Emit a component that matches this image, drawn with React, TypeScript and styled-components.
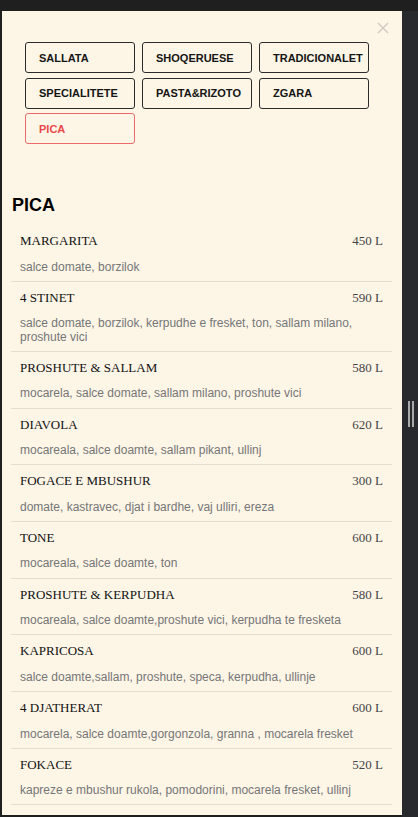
import React from "react";
import styled, { createGlobalStyle } from "styled-components";

const Global = createGlobalStyle`
  html, body { margin: 0; padding: 0; background: #1f1f1f; height: 100%; overflow: hidden; }
  #root { height: 100%; }
`;

const Page = styled.div`
  display: flex;
  flex-direction: column;
  height: 817px;
`;

const TopBar = styled.div`
  height: 11px;
  background: #1f1f1f;
  flex: none;
`;

const Body = styled.div`
  display: flex;
  flex: 1;
  min-height: 0;
  padding-left: 2px;
`;

const Panel = styled.div`
  position: relative;
  width: 400px;
  height: 804px;
  background: #fdf5e6;
  flex: none;
`;

const Strip = styled.div`
  flex: 1;
  background: #27292c;
  display: flex;
  align-items: flex-start;
  justify-content: center;
  padding-top: 390px;
`;

const Handle = styled.div`
  display: flex;
  gap: 2px;
  margin-left: 1px;
`;

const Bar = styled.span`
  width: 2px;
  height: 26px;
  background: #a9a9a9;
`;

const Close = styled.button`
  position: absolute;
  top: 11px;
  right: 13px;
  width: 12px;
  height: 12px;
  padding: 0;
  border: 0;
  background: none;
  display: flex;
`;

const Tabs = styled.div`
  display: grid;
  grid-template-columns: repeat(3, 110px);
  column-gap: 7px;
  row-gap: 4.5px;
  padding: 31px 0 0 23px;
`;

const Tab = styled.button<{ $active?: boolean }>`
  height: 31px;
  box-sizing: border-box;
  border: 1.5px solid ${(p) => (p.$active ? "#ec6a6a" : "#2b2b2b")};
  border-radius: 3px;
  background: transparent;
  text-align: left;
  padding: 0 0 0 13px;
  font-family: Arial, "Liberation Sans", sans-serif;
  font-weight: bold;
  font-size: 11px;
  color: ${(p) => (p.$active ? "#e8494b" : "#151515")};
`;

const Heading = styled.h2`
  margin: 50px 0 0 10px;
  font-family: Arial, "Liberation Sans", sans-serif;
  font-weight: bold;
  font-size: 18px;
  line-height: 22px;
  color: #000;
`;

const List = styled.ul`
  list-style: none;
  margin: 9px 10px 0 9px;
  padding: 0;
`;

const Item = styled.li`
  padding: 8px 9px 6.7px;
  border-bottom: 1px solid #e4ddd0;
`;

const Row = styled.div`
  display: flex;
  justify-content: space-between;
  font-family: "Times New Roman", "Liberation Serif", serif;
  font-size: 13px;
  line-height: 15px;
`;

const Name = styled.span`
  color: #111;
`;

const Price = styled.span`
  color: #444;
`;

const Desc = styled.p`
  margin: 12.5px 0 0;
  font-family: Arial, "Liberation Sans", sans-serif;
  font-size: 12px;
  line-height: 13.5px;
  color: #767676;
`;

const tabs = ["SALLATA", "SHOQERUESE", "TRADICIONALET", "SPECIALITETE", "PASTA&RIZOTO", "ZGARA", "PICA"];

const items = [
  ["MARGARITA", "450 L", "salce domate, borzilok"],
  ["4 STINET", "590 L", "salce domate, borzilok, kerpudhe e fresket, ton, sallam milano, proshute vici"],
  ["PROSHUTE & SALLAM", "580 L", "mocarela, salce domate, sallam milano, proshute vici"],
  ["DIAVOLA", "620 L", "mocareala, salce doamte, sallam pikant, ullinj"],
  ["FOGACE E MBUSHUR", "300 L", "domate, kastravec, djat i bardhe, vaj ulliri, ereza"],
  ["TONE", "600 L", "mocareala, salce doamte, ton"],
  ["PROSHUTE & KERPUDHA", "580 L", "mocareala, salce doamte,proshute vici, kerpudha te fresketa"],
  ["KAPRICOSA", "600 L", "salce doamte,sallam, proshute, speca, kerpudha, ullinje"],
  ["4 DJATHERAT", "600 L", "mocarela, salce doamte,gorgonzola, granna , mocarela fresket"],
  ["FOKACE", "520 L", "kapreze e mbushur rukola, pomodorini, mocarela fresket, ullinj"],
];

export default function App() {
  return (
    <Page>
      <Global />
      <TopBar />
      <Body>
        <Panel>
          <Close aria-label="close">
            <svg width="12" height="12" viewBox="0 0 12 12">
              <path d="M1 1L11 11M11 1L1 11" stroke="#cfcac0" strokeWidth="1.3" fill="none" />
            </svg>
          </Close>
          <Tabs>
            {tabs.map((t) => (
              <Tab key={t} $active={t === "PICA"}>
                {t}
              </Tab>
            ))}
          </Tabs>
          <Heading>PICA</Heading>
          <List>
            {items.map(([n, p, d]) => (
              <Item key={n}>
                <Row>
                  <Name>{n}</Name>
                  <Price>{p}</Price>
                </Row>
                <Desc>{d}</Desc>
              </Item>
            ))}
          </List>
        </Panel>
        <Strip>
          <Handle>
            <Bar />
            <Bar />
          </Handle>
        </Strip>
      </Body>
    </Page>
  );
}
